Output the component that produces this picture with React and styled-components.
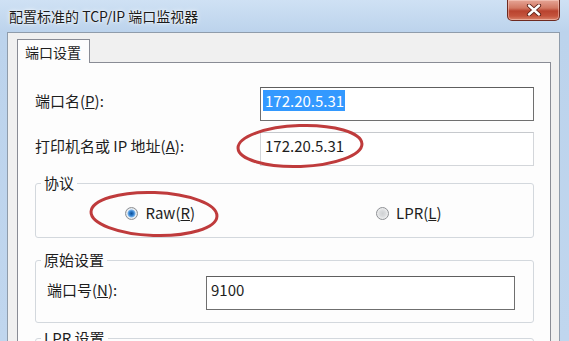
import React from "react";
import styled, { createGlobalStyle } from "styled-components";

const GlobalStyle = createGlobalStyle`
  * { box-sizing: border-box; }
  html, body { margin: 0; padding: 0; }
  body {
    width: 569px;
    height: 341px;
    overflow: hidden;
    background: #c4d8ee;
    font-family: "Noto Sans CJK SC", "Noto Sans", sans-serif;
  }
`;

const Window = styled.div`
  position: relative;
  width: 569px;
  height: 341px;
  overflow: hidden;
  display: flex;
  flex-direction: column;
  background: linear-gradient(#cfe1f4, #bcd3ec 32px, #c0d6ee);
`;

const TitleBar = styled.div`
  flex: none;
  height: 32px;
  display: flex;
  align-items: flex-start;
  justify-content: space-between;
  padding: 0 9px 0 9px;
`;

const Title = styled.span`
  margin-top: 7px;
  font-size: 14px;
  line-height: 18px;
  color: #1b1b1b;
  text-shadow: 0 0 5px #fff, 0 0 2px #fff;
`;

const CloseButton = styled.div`
  width: 53px;
  height: 21px;
  display: flex;
  align-items: center;
  justify-content: center;
  border: 1px solid #6e2a20;
  border-top: none;
  border-radius: 0 0 5px 5px;
  background: linear-gradient(#e6a596 0, #d27863 40%, #b9432f 55%, #c4533c 80%, #d9846c 100%);
  box-shadow: inset 0 0 0 1px rgba(255, 220, 210, 0.45);
`;

const Client = styled.div`
  flex: 1;
  margin: 0 9px 0 7px;
  border: 1px solid #8f9cab;
  border-bottom: none;
  background: #f0f0f0;
  padding: 6px 8px 0 9px;
  display: flex;
  flex-direction: column;
`;

const TabStrip = styled.div`
  display: flex;
`;

const Tab = styled.div`
  position: relative;
  z-index: 1;
  height: 24px;
  margin-bottom: -1px;
  padding: 0 8px 0 7px;
  display: flex;
  align-items: center;
  background: #fdfdfd;
  border: 1px solid #898c95;
  border-bottom: none;
  font-size: 14px;
  color: #1e1e1e;
`;

const Page = styled.div`
  flex: 1;
  background: #fdfdfd;
  border: 1px solid #898c95;
  border-bottom: none;
  padding: 24px 16px 0 17px;
  display: flex;
  flex-direction: column;
`;

const FieldRow = styled.div`
  display: grid;
  grid-template-columns: 225px 1fr;
  align-items: start;
  margin-bottom: 11px;
`;

const Label = styled.span`
  padding-top: 3px;
  font-size: 15px;
  line-height: 21px;
  color: #1e1e1e;
  white-space: nowrap;
`;

const TextBox = styled.div`
  height: 34px;
  padding: 2px 4px;
  border: 1px solid ${(p) => (p.$focused ? "#6f6f6f" : "#d3d6da")};
  border-top-color: ${(p) => (p.$focused ? "#5e5e5e" : "#c6c9cd")};
  background: #fff;
  font-size: 15px;
  line-height: 21px;
  color: #1e1e1e;
  white-space: nowrap;
`;

const Selected = styled.span`
  display: inline-block;
  margin-left: -2px;
  background: #3399ff;
  color: #fff;
  padding: 0 1px 0 2px;
`;

const Group = styled.fieldset`
  margin: ${(p) => p.$gap}px 0 0;
  padding: 0;
  min-width: 0;
  border: 1px solid #d3d8dd;
  border-radius: 3px;
`;

const Legend = styled.legend`
  margin-left: 5px;
  padding: 0 3px;
  font-size: 15px;
  line-height: 18px;
  color: #1e1e1e;
`;

const RadioRow = styled.div`
  display: grid;
  grid-template-columns: 1fr 1fr;
  justify-items: center;
  align-items: center;
  height: 20px;
  margin: 11px 0 14px;
`;

const RadioLabel = styled.label`
  display: inline-flex;
  align-items: center;
  gap: 7px;
  font-size: 15px;
  line-height: 20px;
  color: #1e1e1e;
`;

const RadioDot = styled.span`
  width: 13px;
  height: 13px;
  border-radius: 50%;
  border: 1px solid #8d9094;
  background: ${(p) =>
    p.$checked
      ? "radial-gradient(circle, #0f4f95 0, #2b78c8 2px, #78b3ea 3.6px, #eef2f6 4.4px, #d6d9dc 6px)"
      : "radial-gradient(circle, #cfd1d3 0, #dadcde 3px, #f3f3f3 6px)"};
`;

const GroupBody = styled.div`
  display: grid;
  grid-template-columns: 159px 1fr;
  align-items: start;
  min-height: 34px;
  padding: 7px 18px 12px 11px;
`;

const Marks = styled.svg`
  position: absolute;
  left: 0;
  top: 0;
  pointer-events: none;
`;

function Radio({ checked, children }) {
  return (
    <RadioLabel>
      <RadioDot $checked={checked} />
      <span>{children}</span>
    </RadioLabel>
  );
}

export default function App() {
  return (
    <>
      <GlobalStyle />
      <Window>
        <TitleBar>
          <Title>配置标准的 TCP/IP 端口监视器</Title>
          <CloseButton>
            <svg width="16" height="12" viewBox="0 0 16 12">
              <path d="M3 1.5 L13 10.5 M13 1.5 L3 10.5" stroke="#5b1f16" strokeWidth="4.2" strokeLinecap="round" />
              <path d="M3 1.5 L13 10.5 M13 1.5 L3 10.5" stroke="#fff" strokeWidth="2.4" strokeLinecap="round" />
            </svg>
          </CloseButton>
        </TitleBar>
        <Client>
          <TabStrip>
            <Tab>端口设置</Tab>
          </TabStrip>
          <Page>
            <FieldRow>
              <Label>端口名(<u>P</u>):</Label>
              <TextBox $focused>
                <Selected>172.20.5.31</Selected>
              </TextBox>
            </FieldRow>
            <FieldRow>
              <Label>打印机名或 IP 地址(<u>A</u>):</Label>
              <TextBox>172.20.5.31</TextBox>
            </FieldRow>
            <Group $gap={-3}>
              <Legend>协议</Legend>
              <RadioRow>
                <Radio checked>Raw(<u>R</u>)</Radio>
                <Radio>LPR(<u>L</u>)</Radio>
              </RadioRow>
            </Group>
            <Group $gap={13}>
              <Legend>原始设置</Legend>
              <GroupBody>
                <Label>端口号(<u>N</u>):</Label>
                <TextBox $focused>9100</TextBox>
              </GroupBody>
            </Group>
            <Group $gap={6}>
              <Legend>LPR 设置</Legend>
              <GroupBody />
            </Group>
          </Page>
        </Client>
        <Marks width="569" height="341" viewBox="0 0 569 341">
          <ellipse cx="300" cy="146" rx="62" ry="20.5" fill="none" stroke="#bf3b3c" strokeWidth="3" transform="rotate(-2 300 146)" />
          <ellipse cx="154" cy="214" rx="63" ry="21.5" fill="none" stroke="#bf3b3c" strokeWidth="3" transform="rotate(2 154 214)" />
        </Marks>
      </Window>
    </>
  );
}
